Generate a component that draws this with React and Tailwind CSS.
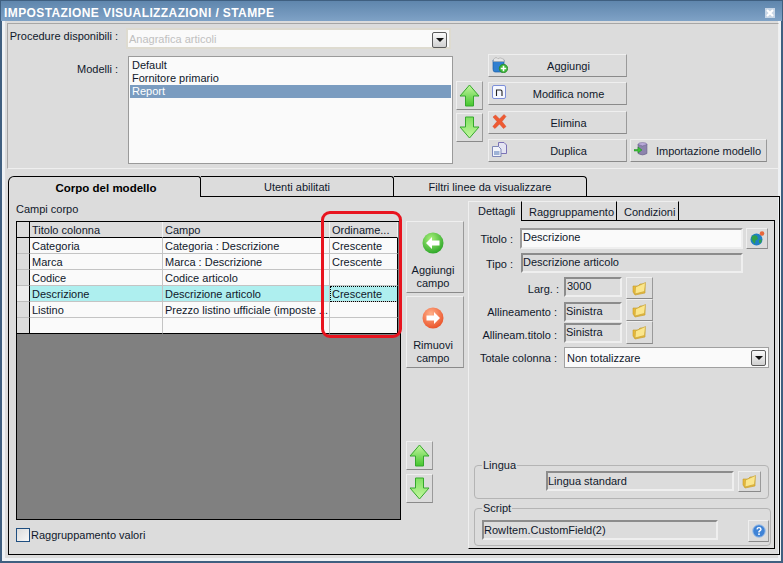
import React from 'react';

const raised = 'border border-t-[#efefef] border-l-[#efefef] border-r-[#9a9a9a] border-b-[#8a8a8a] bg-[#dcdcdc]';
const sunken = 'border-2 border-t-[#8c8c8c] border-l-[#8c8c8c] border-r-[#efefef] border-b-[#efefef] bg-[#dcdcdc]';

const ArrowIcon = ({ down }) => (
  <svg width="21" height="23" viewBox="0 0 21 23">
    <defs>
      <linearGradient id={down ? 'ga-down' : 'ga-up'} x1="0" y1="0" x2="0" y2="1">
        <stop offset="0" stopColor={down ? '#7fe060' : '#c4f7a0'} />
        <stop offset="1" stopColor={down ? '#c4f7a0' : '#45c52e'} />
      </linearGradient>
    </defs>
    <path
      d={down ? 'M6.5 1H14.5V11H20L10.5 22L1 11H6.5Z' : 'M10.5 1L20 12H14.5V22H6.5V12H1Z'}
      fill={`url(#${down ? 'ga-down' : 'ga-up'})`}
      stroke="#35a82c"
    />
  </svg>
);

const ArrowBtn = ({ down, className = '' }) => (
  <div className={`${raised} w-[27px] h-[29px] flex items-center justify-center ${className}`}>
    <ArrowIcon down={down} />
  </div>
);

const AddIcon = () => (
  <svg width="16" height="16" viewBox="0 0 16 16">
    <path d="M1 3H12V11L10 15H3Q1 15 1 12Z" fill="#2f7fd0" stroke="#1d5ea8" strokeWidth="0.7" />
    <path d="M1.5 2.5L3 .8H5L6 1.8L8 .8L10 1.5L12 2.5V4.5H1.5Z" fill="#e6e6e6" stroke="#a5a5a5" strokeWidth="0.6" />
    <circle cx="11.5" cy="11.5" r="4.2" fill="#3fb83a" stroke="#1f7f22" strokeWidth="0.7" />
    <path d="M11.5 8.8V14.2M8.8 11.5H14.2" stroke="#fff" strokeWidth="1.6" />
  </svg>
);

const RenameIcon = () => (
  <svg width="14" height="14" viewBox="0 0 14 14">
    <rect x="0.5" y="0.5" width="13" height="13" rx="1.5" fill="#f6f8ff" stroke="#7d8fd8" />
    <path d="M4.5 11V5H8.5Q10 5 10 6.5V11" fill="none" stroke="#222" strokeWidth="1.1" />
  </svg>
);

const DeleteIcon = () => (
  <svg width="15" height="15" viewBox="0 0 15 15">
    <path
      d="M1 3L3.5 1L7.5 5L12 .5L14 2.5L10 7.5L14 12.5L11.5 14.5L7.5 10L3 14.5L.8 12.5L5 7.5Z"
      fill="#ee5a32"
      stroke="#d8492a"
      strokeWidth="0.5"
    />
  </svg>
);

const DuplicateIcon = () => (
  <svg width="15" height="15" viewBox="0 0 15 15">
    <path d="M6.5 .5H12L14.5 3V11.5H6.5Z" fill="#e4e4f2" stroke="#7b72b5" />
    <path d="M.5 4.5H6.5L9 7V14.5H.5Z" fill="#f2f4fa" stroke="#7f88b8" />
    <rect x="2" y="9" width="5.5" height="4" fill="#9fb3d6" />
  </svg>
);

const ImportIcon = () => (
  <svg width="14" height="14" viewBox="0 0 14 14">
    <ellipse cx="8.5" cy="2.5" rx="4.5" ry="2" fill="#b9a9d9" stroke="#6c6390" strokeWidth="0.5" />
    <path d="M4 2.5V11.5Q8.5 14.5 13 11.5V2.5Q8.5 5.5 4 2.5Z" fill="#8d84ad" stroke="#5f5880" strokeWidth="0.5" />
    <path d="M0 7.5H4V5L8 8L4 11V9H0Z" fill="#3fc43a" stroke="#1f8a22" strokeWidth="0.5" />
  </svg>
);

const FolderIcon = () => (
  <svg width="15" height="15" viewBox="0 0 15 15">
    <path d="M1 5H6L8 3H13V12L3 14L1 11Z" fill="#e9b93a" stroke="#c39a2a" strokeWidth="0.6" />
    <path d="M3.5 6L13.5 1.5L12.5 10.5L3 13Z" fill="#fbe68c" stroke="#c9a437" strokeWidth="0.7" />
  </svg>
);

const FolderBtn = ({ className = '' }) => (
  <div className={`${raised} flex items-center justify-center ${className}`}>
    <FolderIcon />
  </div>
);

const GlobeIcon = () => (
  <svg width="15" height="15" viewBox="0 0 15 15">
    <circle cx="6.5" cy="8.5" r="6" fill="#1f7fc4" />
    <path d="M2 5Q5 3.5 7 5L8 8L5.5 9.5L5 13L3 11L1.5 8ZM9 9L12 8.5L11 12L9 12Z" fill="#2fa04a" />
    <circle cx="12" cy="2.5" r="2.3" fill="#e8663a" />
  </svg>
);

const HelpIcon = () => (
  <svg width="14" height="14" viewBox="0 0 14 14">
    <circle cx="7" cy="7" r="6.3" fill="#3f83d6" stroke="#a8c4e6" strokeWidth="1" />
    <path d="M5 5.3Q5.2 3.6 7 3.6T9 5.3Q9 6.3 7.6 7L7 7.6V8.4" fill="none" stroke="#fff" strokeWidth="1.4" />
    <rect x="6.2" y="9.4" width="1.6" height="1.6" fill="#fff" />
  </svg>
);

const RoundArrow = ({ right }) => (
  <svg width="22" height="22" viewBox="0 0 22 22">
    <defs>
      <radialGradient id={right ? 'ra-r' : 'ra-l'} cx="0.4" cy="0.3" r="0.8">
        <stop offset="0" stopColor={right ? '#ffb08a' : '#a8f07a'} />
        <stop offset="1" stopColor={right ? '#e8481e' : '#1f9e1f'} />
      </radialGradient>
    </defs>
    <circle cx="11" cy="11" r="10.5" fill={`url(#${right ? 'ra-r' : 'ra-l'})`} />
    <path
      d={right ? 'M12 5L18 11L12 17V13.5H4.5V8.5H12Z' : 'M10 5L4 11L10 17V13.5H17.5V8.5H10Z'}
      fill="#fff"
    />
  </svg>
);

const ComboBtn = () => (
  <div className="absolute right-[2px] top-[2px] w-[15px] h-[16px] rounded-[2px] border border-[#5a5a5a] bg-gradient-to-b from-[#fafafa] to-[#d0d0d0] flex items-center justify-center">
    <div className="w-0 h-0 border-x-[4px] border-x-transparent border-t-[4px] border-t-[#111]" />
  </div>
);

const ActionBtn = ({ icon, label, className = 'w-[139px]', textClass = 'pl-[22px]' }) => (
  <div className={`${raised} h-[23px] relative flex items-center justify-center pt-[2px] ${className}`}>
    <div className="absolute left-[3px] top-[2px]">{icon}</div>
    <span className={textClass}>{label}</span>
  </div>
);

const rows = [
  ['Categoria', 'Categoria : Descrizione', 'Crescente'],
  ['Marca', 'Marca : Descrizione', 'Crescente'],
  ['Codice', 'Codice articolo', ''],
  ['Descrizione', 'Descrizione articolo', 'Crescente'],
  ['Listino', 'Prezzo listino ufficiale (imposte ...', ''],
  ['', '', ''],
];

const FieldGrid = () => (
  <div className="relative w-[385px] h-[299px] border border-black bg-[#808080]">
    <div className="grid grid-cols-[13px_133px_167px_68px] w-[381px] auto-rows-[16px]">
      <div className="h-[16px] bg-[#dcdcdc] border-r border-black border-b" />
      {['Titolo colonna', 'Campo', 'Ordiname...'].map((t) => (
        <div key={t} className="h-[16px] bg-[#dcdcdc] border-r border-b border-r-[#f2f2f2] border-b-black px-[2px] leading-[16px]">
          {t}
        </div>
      ))}
      {rows.map((r, i) => {
        const selected = i === 3;
        const cellBg = selected ? 'bg-[#aeefef]' : 'bg-[#fafafa]';
        return (
          <React.Fragment key={i}>
            <div className={`h-[16px] border-r border-r-black border-b border-b-[#bdbdbd] ${selected ? 'bg-[#ececec]' : 'bg-[#dcdcdc]'} ${i === 5 ? 'border-b-black' : ''}`} />
            <div className={`h-[16px] ${cellBg} border-r border-b border-[#c4c4c4] px-[2px] leading-[16px] whitespace-nowrap overflow-hidden ${i === 5 ? 'border-b-black' : ''}`}>{r[0]}</div>
            <div className={`h-[16px] ${cellBg} border-r border-b border-[#c4c4c4] px-[2px] leading-[16px] whitespace-nowrap overflow-hidden ${i === 5 ? 'border-b-black' : ''}`}>{r[1]}</div>
            <div className={`h-[16px] border-r border-r-black border-b border-b-[#c4c4c4] px-[2px] leading-[16px] whitespace-nowrap overflow-hidden ${selected ? 'bg-[#aeefef] outline-1 -outline-offset-1 outline-dotted outline-black' : 'bg-[#fafafa]'} ${i === 5 ? 'border-b-black' : ''}`}>{r[2]}</div>
          </React.Fragment>
        );
      })}
    </div>
  </div>
);

export default function App() {
  return (
    <div className="relative w-[783px] h-[563px] overflow-hidden bg-[#dcdcdc] text-[11px] leading-[13px] text-[#10182b] whitespace-nowrap font-['Liberation_Sans',sans-serif] border-x border-b border-[#3f5f80] shadow-[inset_0_0_0_1px_#3f5f80,inset_0_0_0_4px_#eef1f4]">
      <div className="h-[21px] -mx-px bg-gradient-to-b from-[#5f86ad] to-[#7fa2c6] border-t border-[#3f5f80] flex items-center justify-between pl-[4px] pr-[8px] pt-[4px]">
        <span className="text-white font-bold text-[12px] tracking-[0.4px]">IMPOSTAZIONE VISUALIZZAZIONI / STAMPE</span>
        <div className="w-[10px] h-[10px] bg-[#c8d6e6] flex items-center justify-center">
          <svg width="8" height="8" viewBox="0 0 8 8">
            <path d="M1 1L7 7M7 1L1 7" stroke="#fff" strokeWidth="2" />
          </svg>
        </div>
      </div>

      {/* Top panel */}
      <div className="ml-[6px] mt-[2px] w-[772px] h-[146px] border border-[#a6a6a6] border-r-[#efefef] border-b-[#efefef]">
        <div className="flex items-start mt-[4px]">
          <div className="w-[110px] text-right pt-[2px]">Procedure disponibili :</div>
          <div className="relative ml-[8px] w-[325px] h-[21px] bg-[#fafafa] border-2 border-[#dedbd0] text-[#c0c0c0] pl-[1px] leading-[19px]">
            Anagrafica articoli
            <ComboBtn />
          </div>
        </div>
        <div className="flex items-start mt-[5px]">
          <div className="w-[110px] text-right mt-[9px]">Modelli :</div>
          <div className="ml-[10px] mt-[2px] w-[325px] h-[108px] bg-[#fafafa] border border-[#9a9a9a] pt-[2px] px-[1px]">
            <div className="h-[13px] pl-[2px]">Default</div>
            <div className="h-[13px] pl-[2px]">Fornitore primario</div>
            <div className="h-[13px] pl-[2px] bg-[#7a9cc0] text-white">Report</div>
          </div>
          <div className="ml-[3px] mt-[27px] flex flex-col gap-[3px]">
            <ArrowBtn />
            <ArrowBtn down />
          </div>
          <div className="ml-[5px] flex flex-col">
            <ActionBtn icon={<AddIcon />} label="Aggiungi" />
            <ActionBtn icon={<RenameIcon />} label="Modifica nome" className="w-[139px] mt-[5px]" />
            <ActionBtn icon={<DeleteIcon />} label="Elimina" className="w-[139px] mt-[6px]" />
            <ActionBtn icon={<DuplicateIcon />} label="Duplica" className="w-[139px] mt-[5px]" />
          </div>
          <div className="ml-[3px] mt-[85px]">
            <ActionBtn icon={<ImportIcon />} label="Importazione modello" className="w-[137px]" textClass="pl-[20px]" />
          </div>
        </div>
      </div>

      {/* Main tabs */}
      <div className="ml-[7px] mt-[7px] flex relative z-10 h-[20px]">
        <div className="w-[193px] h-[21px] bg-[#dcdcdc] border-l border-t border-r border-black rounded-tl-[6px] rounded-tr-[3px] text-center font-bold text-[11.5px] leading-[22px] pl-[3px] text-black">Corpo del modello</div>
        <div className="w-[193px] h-[20px] border-t border-r border-black rounded-tr-[3px] text-center leading-[20px]">Utenti abilitati</div>
        <div className="w-[193px] h-[20px] border-t border-r border-black rounded-tr-[4px] text-center leading-[20px]">Filtri linee da visualizzare</div>
      </div>

      <div className="ml-[7px] w-[772px] h-[359px] border border-black flex">
        <div className="ml-[7px]">
          <div className="h-[24px] pt-[6px]">Campi corpo</div>
          <div className="relative">
            <FieldGrid />
            <div className="absolute left-[305px] -top-[10px] w-[81px] h-[127px] border-[3px] border-[#e8141f] rounded-[9px]" />
          </div>
          <div className="flex items-center mt-[8px]">
            <div className="w-[14px] h-[14px] border border-[#1f4e80] bg-gradient-to-br from-[#dcdcdc] to-[#f8f8f8]" />
            <span className="ml-[1px]">Raggruppamento valori</span>
          </div>
        </div>

        <div className="ml-[5px] mt-[24px] w-[58px]">
          <div className={`${raised} h-[72px] flex flex-col items-center pt-[10px] pr-[4px]`}>
            <RoundArrow />
            <div className="mt-[10px] text-center">Aggiungi<br />campo</div>
          </div>
          <div className={`${raised} h-[72px] mt-[3px] flex flex-col items-center pt-[10px] pr-[4px]`}>
            <RoundArrow right />
            <div className="mt-[10px] text-center">Rimuovi<br />campo</div>
          </div>
          <ArrowBtn className="mt-[73px]" />
          <ArrowBtn down className="mt-[4px]" />
        </div>

        <div className="ml-[4px] mt-[4px] w-[308px]">
          <div className="flex h-[20px] relative z-10">
            <div className="w-[54px] h-[20px] pl-[9px] pt-[3px] border-r border-black bg-[#dcdcdc] border-t border-l border-t-[#efefef] border-l-[#efefef]">Dettagli</div>
            <div className="w-[95px] h-[19px] pl-[7px] pt-[4px] border-r border-black border-t border-t-[#efefef]">Raggruppamento</div>
            <div className="w-[62px] h-[19px] pl-[7px] pt-[4px] border-r border-black border-t border-t-[#efefef]">Condizioni</div>
          </div>
          <div className="w-[307px] h-[329px] -mt-px border border-black border-l-[#efefef] bg-[#dcdcdc]">
            <div className="flex items-center mt-[7px]">
              <div className="w-[44px] text-right pt-[2px]">Titolo :</div>
              <div className="ml-[7px] w-[223px] h-[21px] border-2 border-t-[#9a9a9a] border-l-[#9a9a9a] border-r-[#efefef] border-b-[#efefef] bg-[#fafafa] pl-[1px] leading-[15px]">Descrizione</div>
              <div className={`${raised} ml-[3px] w-[22px] h-[21px] flex items-center justify-center`}><GlobeIcon /></div>
            </div>
            <div className="flex items-center mt-[4px]">
              <div className="w-[44px] text-right pt-[2px]">Tipo :</div>
              <div className={`${sunken} ml-[8px] w-[222px] h-[20px] leading-[15px]`}>Descrizione articolo</div>
            </div>
            <div className="flex items-start mt-[4px] h-[22px]">
              <div className="w-[90px] text-right mt-[6px]">Larg. :</div>
              <div className={`${sunken} ml-[5px] w-[58px] h-[20px] pl-[1px] leading-[15px]`}>3000</div>
              <FolderBtn className="ml-[4px] w-[27px] h-[22px]" />
            </div>
            <div className="flex items-start h-[22px]">
              <div className="w-[88px] text-right mt-[7px]">Allineamento :</div>
              <div className={`${sunken} ml-[7px] mt-[3px] w-[58px] h-[20px] leading-[15px]`}>Sinistra</div>
              <FolderBtn className="ml-[4px] w-[27px] h-[22px]" />
            </div>
            <div className="flex items-start h-[23px]">
              <div className="w-[88px] text-right mt-[8px]">Allineam.titolo :</div>
              <div className={`${sunken} ml-[7px] mt-[2px] w-[58px] h-[20px] leading-[15px]`}>Sinistra</div>
              <FolderBtn className="ml-[4px] w-[27px] h-[23px]" />
            </div>
            <div className="flex items-center mt-[3px]">
              <div className="w-[88px] text-right pt-[2px]">Totale colonna :</div>
              <div className="relative ml-[7px] w-[205px] h-[21px] border border-[#a0a0a0] bg-[#fafafa] pl-[2px] leading-[21px]">
                Non totalizzare
                <ComboBtn />
              </div>
            </div>

            <div className="relative ml-[5px] mt-[97px] w-[295px] h-[34px] border border-[#b4b4b4] rounded-[4px] flex items-start">
              <span className="absolute left-[7px] -top-[7px] bg-[#dcdcdc] px-[1px]">Lingua</span>
              <div className={`${sunken} ml-[71px] mt-[5px] w-[188px] h-[20px] leading-[16px]`}>Lingua standard</div>
              <FolderBtn className="ml-[4px] mt-[5px] w-[23px] h-[21px]" />
            </div>
            <div className="relative ml-[5px] mt-[9px] w-[297px] h-[38px] border border-[#b4b4b4] rounded-[4px] flex items-start">
              <span className="absolute left-[7px] -top-[7px] bg-[#dcdcdc] px-[1px]">Script</span>
              <div className={`${sunken} ml-[7px] mt-[11px] w-[236px] h-[20px] leading-[16px]`}>RowItem.CustomField(2)</div>
              <div className={`${raised} ml-[30px] mt-[11px] w-[21px] h-[22px] flex items-center justify-center`}><HelpIcon /></div>
            </div>
          </div>
        </div>
      </div>
    </div>
  );
}
